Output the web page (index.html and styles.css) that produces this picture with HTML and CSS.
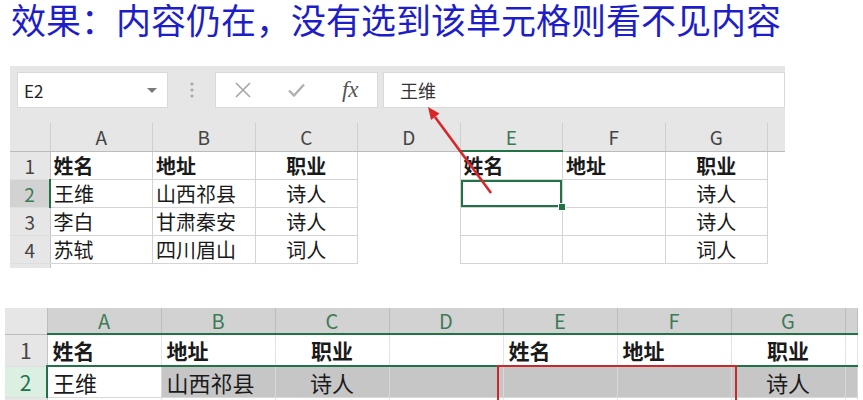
FILE: index.html
```html
<!DOCTYPE html>
<html lang="zh-CN">
<head>
  <meta charset="UTF-8" />
  <title>效果：内容仍在</title>
  <link rel="stylesheet" href="styles.css">
</head>
<body>
  <h1 class="title">效果：内容仍在，没有选到该单元格则看不见内容</h1>

  <div class="sheet sheet-top">
    <div class="formula-bar">
      <div class="name-box"><span>E2</span><span class="caret"></span></div>
      <div class="grip">
        <svg width="4" height="18" viewBox="0 0 4 18"><circle cx="2" cy="3" r="1.6" fill="#a8a8a8"/><circle cx="2" cy="9" r="1.6" fill="#a8a8a8"/><circle cx="2" cy="15" r="1.6" fill="#a8a8a8"/></svg>
      </div>
      <div class="fx-buttons">
        <span class="slot">
          <svg width="16" height="16" viewBox="0 0 16 16"><path d="M1 1 L15 15 M15 1 L1 15" stroke="#a6a6a6" stroke-width="1.6" fill="none"/></svg>
        </span>
        <span class="slot">
          <svg width="17" height="14" viewBox="0 0 17 14"><path d="M1 7.5 L6 12.5 L16 1.5" stroke="#b0b0b0" stroke-width="2.4" fill="none"/></svg>
        </span>
        <span class="slot fx">fx</span>
      </div>
      <div class="formula-input">王维</div>
    </div>

    <table class="grid grid-top">
      <colgroup>
        <col class="rh"><col class="cw"><col class="cw"><col class="cw"><col class="cw"><col class="cw"><col class="cw"><col class="cw"><col class="fill">
      </colgroup>
      <tr class="hdr">
        <th class="corner"></th><th>A</th><th>B</th><th>C</th><th>D</th><th class="sel">E</th><th>F</th><th>G</th><th class="blank"></th>
      </tr>
      <tr>
        <th class="rn">1</th>
        <td class="b bold">姓名</td><td class="b bold">地址</td><td class="b bold c">职业</td><td></td>
        <td class="b bold">姓名</td><td class="b bold">地址</td><td class="b bold c">职业</td><td></td>
      </tr>
      <tr>
        <th class="rn sel">2</th>
        <td class="b">王维</td><td class="b">山西祁县</td><td class="b c">诗人</td><td></td>
        <td class="b active"></td><td class="b"></td><td class="b c">诗人</td><td></td>
      </tr>
      <tr>
        <th class="rn">3</th>
        <td class="b">李白</td><td class="b">甘肃秦安</td><td class="b c">诗人</td><td></td>
        <td class="b"></td><td class="b"></td><td class="b c">诗人</td><td></td>
      </tr>
      <tr>
        <th class="rn">4</th>
        <td class="b">苏轼</td><td class="b">四川眉山</td><td class="b c">词人</td><td></td>
        <td class="b"></td><td class="b"></td><td class="b c">词人</td><td></td>
      </tr>
      <tr class="strip">
        <th class="rn"></th><td></td><td></td><td></td><td></td><td></td><td></td><td></td><td></td>
      </tr>
    </table>

    <svg class="arrow" width="775" height="210" viewBox="0 0 775 210">
      <line x1="481" y1="127" x2="425" y2="51" stroke="#d9262a" stroke-width="2.6"/>
      <polygon points="418,41 429.5,47.5 421,54" fill="#d9262a"/>
    </svg>
  </div>

  <div class="sheet sheet-bottom">
    <table class="grid grid-bottom">
      <colgroup>
        <col class="rh"><col class="cw"><col class="cw"><col class="cw"><col class="cw"><col class="cw"><col class="cw"><col class="cw"><col class="fill">
      </colgroup>
      <tr class="hdr">
        <th class="corner"></th><th>A</th><th>B</th><th>C</th><th>D</th><th>E</th><th>F</th><th>G</th><th></th>
      </tr>
      <tr class="r1">
        <th class="rn">1</th>
        <td class="bold">姓名</td><td class="bold">地址</td><td class="bold c">职业</td><td></td>
        <td class="bold">姓名</td><td class="bold">地址</td><td class="bold c">职业</td><td></td>
      </tr>
      <tr class="r2">
        <th class="rn sel">2</th>
        <td class="active">王维</td><td>山西祁县</td><td class="c">诗人</td><td></td>
        <td></td><td></td><td class="c">诗人</td><td></td>
      </tr>
      <tr class="r3">
        <th class="rn"></th><td></td><td></td><td></td><td></td><td></td><td></td><td></td><td></td>
      </tr>
    </table>
    <div class="mark"></div>
  </div>
</body>
</html>
```

FILE: styles.css
```css
html, body {
  margin: 0;
  overflow: hidden;
}

body {
  background: #fff;
  font-family: "Noto Sans CJK SC", "Noto Sans", sans-serif;
  color: #1a1a1a;
}

.title {
  margin: 0;
  height: 66px;
  padding-left: 11px;
  font-family: "Liberation Sans", "Noto Sans CJK SC", sans-serif;
  font-size: 35px;
  line-height: 44px;
  font-weight: 400;
  color: #1e1ec8;
  white-space: nowrap;
}

.sheet {
  position: relative;
}

.sheet-top {
  margin-left: 10px;
  width: 775px;
}

.sheet-bottom {
  margin: 40px 0 0 5px;
  width: 852px;
}

/* formula bar */
.formula-bar {
  display: flex;
  align-items: center;
  height: 36px;
  padding: 6px 0 15px 7px;
  background: #e6e6e6;
}

.name-box, .fx-buttons, .formula-input {
  height: 36px;
  box-sizing: border-box;
  background: #fff;
  border: 1px solid #d9d9d9;
  display: flex;
  align-items: center;
}

.name-box {
  width: 151px;
  justify-content: space-between;
  padding: 0 10px 0 6px;
  font-size: 17px;
  color: #222;
}

.caret {
  border-left: 5px solid transparent;
  border-right: 5px solid transparent;
  border-top: 5px solid #7a7a7a;
}

.grip {
  width: 47px;
  display: flex;
  justify-content: center;
}

.fx-buttons {
  width: 163px;
}

.slot {
  width: 54px;
  display: flex;
  justify-content: center;
  align-items: center;
}

.fx {
  font-family: "Liberation Serif", serif;
  font-style: italic;
  font-size: 23px;
  color: #555;
}

.formula-input {
  flex: 1;
  margin-left: 5px;
  padding-left: 16px;
  font-size: 18px;
  color: #333;
}

/* grids */
.grid {
  border-collapse: collapse;
  table-layout: fixed;
}

.grid th, .grid td {
  padding: 0 3px;
  white-space: nowrap;
}

.grid th {
  font-weight: 400;
  color: #444;
}

.grid .hdr th {
  background: #e6e6e6;
  border-right: 1px solid #d0d0d0;
  border-bottom: 1px solid #bcbcbc;
}

.grid .corner {
  background: #e6e6e6 linear-gradient(to bottom right, transparent 50%, #b9b9b9 50%) no-repeat right 3px bottom 2px / 14px 14px;
}

.grid .rn {
  background: #e6e6e6;
  border-right: 1px solid #c4c4c4;
  border-bottom: 1px solid #dedede;
}

.grid .bold {
  font-weight: 700;
}

.grid .c {
  text-align: center;
}

/* top sheet */
.grid-top {
  width: 775px;
  font-size: 20px;
}

.grid-top col.rh { width: 40px; }
.grid-top col.cw { width: 102.5px; }
.grid-top col.fill { width: 17.5px; }

.grid-top th, .grid-top td {
  height: 27px;
  line-height: 27px;
  vertical-align: bottom;
}

.grid-top .hdr th {
  height: 27px;
  font-size: 19px;
  vertical-align: middle;
}

.grid-top .rn {
  font-size: 19px;
}

.grid-top .b {
  border: 1px solid #d4d4d4;
}

.grid-top .sel {
  background: #d2d2d2;
  color: #3a7a56;
}

.grid-top .hdr th.sel {
  border-bottom: 2px solid #217346;
}

.grid-top .hdr th.blank {
  border-right: none;
}

.grid-top .rn.sel {
  background: #d2d2d2;
  border-right: 2px solid #217346;
}

.grid-top td.active {
  position: relative;
  box-shadow: inset 0 0 0 2px #217346;
}

.grid-top td.active::after {
  content: "";
  position: absolute;
  right: -4px;
  bottom: -4px;
  width: 6px;
  height: 6px;
  background: #217346;
  border: 1px solid #fff;
}

.grid-top .strip th, .grid-top .strip td {
  height: 4px;
  line-height: 4px;
  border-bottom: none;
}

.arrow {
  position: absolute;
  left: 0;
  top: 0;
  pointer-events: none;
}

/* bottom sheet */
.grid-bottom {
  width: 852px;
  font-size: 22px;
}

.grid-bottom col.rh { width: 42px; }
.grid-bottom col.cw { width: 114px; }
.grid-bottom col.fill { width: 12px; }

.grid-bottom th, .grid-bottom td {
  height: 30px;
  line-height: 30px;
  vertical-align: bottom;
}

.grid-bottom td {
  padding: 0 5px;
  border: 1px solid #e4e4e4;
}

.grid-bottom .r1 td {
  font-size: 21px;
}

.grid-bottom .hdr th {
  height: 25px;
  line-height: 25px;
  font-size: 20px;
  background: #d2d2d2;
  color: #3d7b58;
  border-right: 1px solid #bdbdbd;
  border-bottom: 2px solid #217346;
  vertical-align: middle;
}

.grid-bottom .hdr th.corner {
  background-color: #e6e6e6;
  border-bottom: 1px solid #bcbcbc;
}

.grid-bottom .rn {
  font-size: 21px;
  vertical-align: middle;
}

.grid-bottom .r2 td {
  background: #c6c6c6;
  border-top: 2px solid #217346;
  border-left-color: #d8d8d8;
  border-right-color: #d8d8d8;
  border-bottom-color: #d8d8d8;
}

.grid-bottom .r2 td.active {
  background: #fff;
  border-left: 2px solid #217346;
}

.grid-bottom .rn.sel {
  background: #dcefe3;
  color: #217346;
  border-right: 2px solid #217346;
}

.mark {
  position: absolute;
  left: 492px;
  top: 57px;
  width: 240px;
  height: 70px;
  box-sizing: border-box;
  border: 2px solid #c62a2a;
}
```
